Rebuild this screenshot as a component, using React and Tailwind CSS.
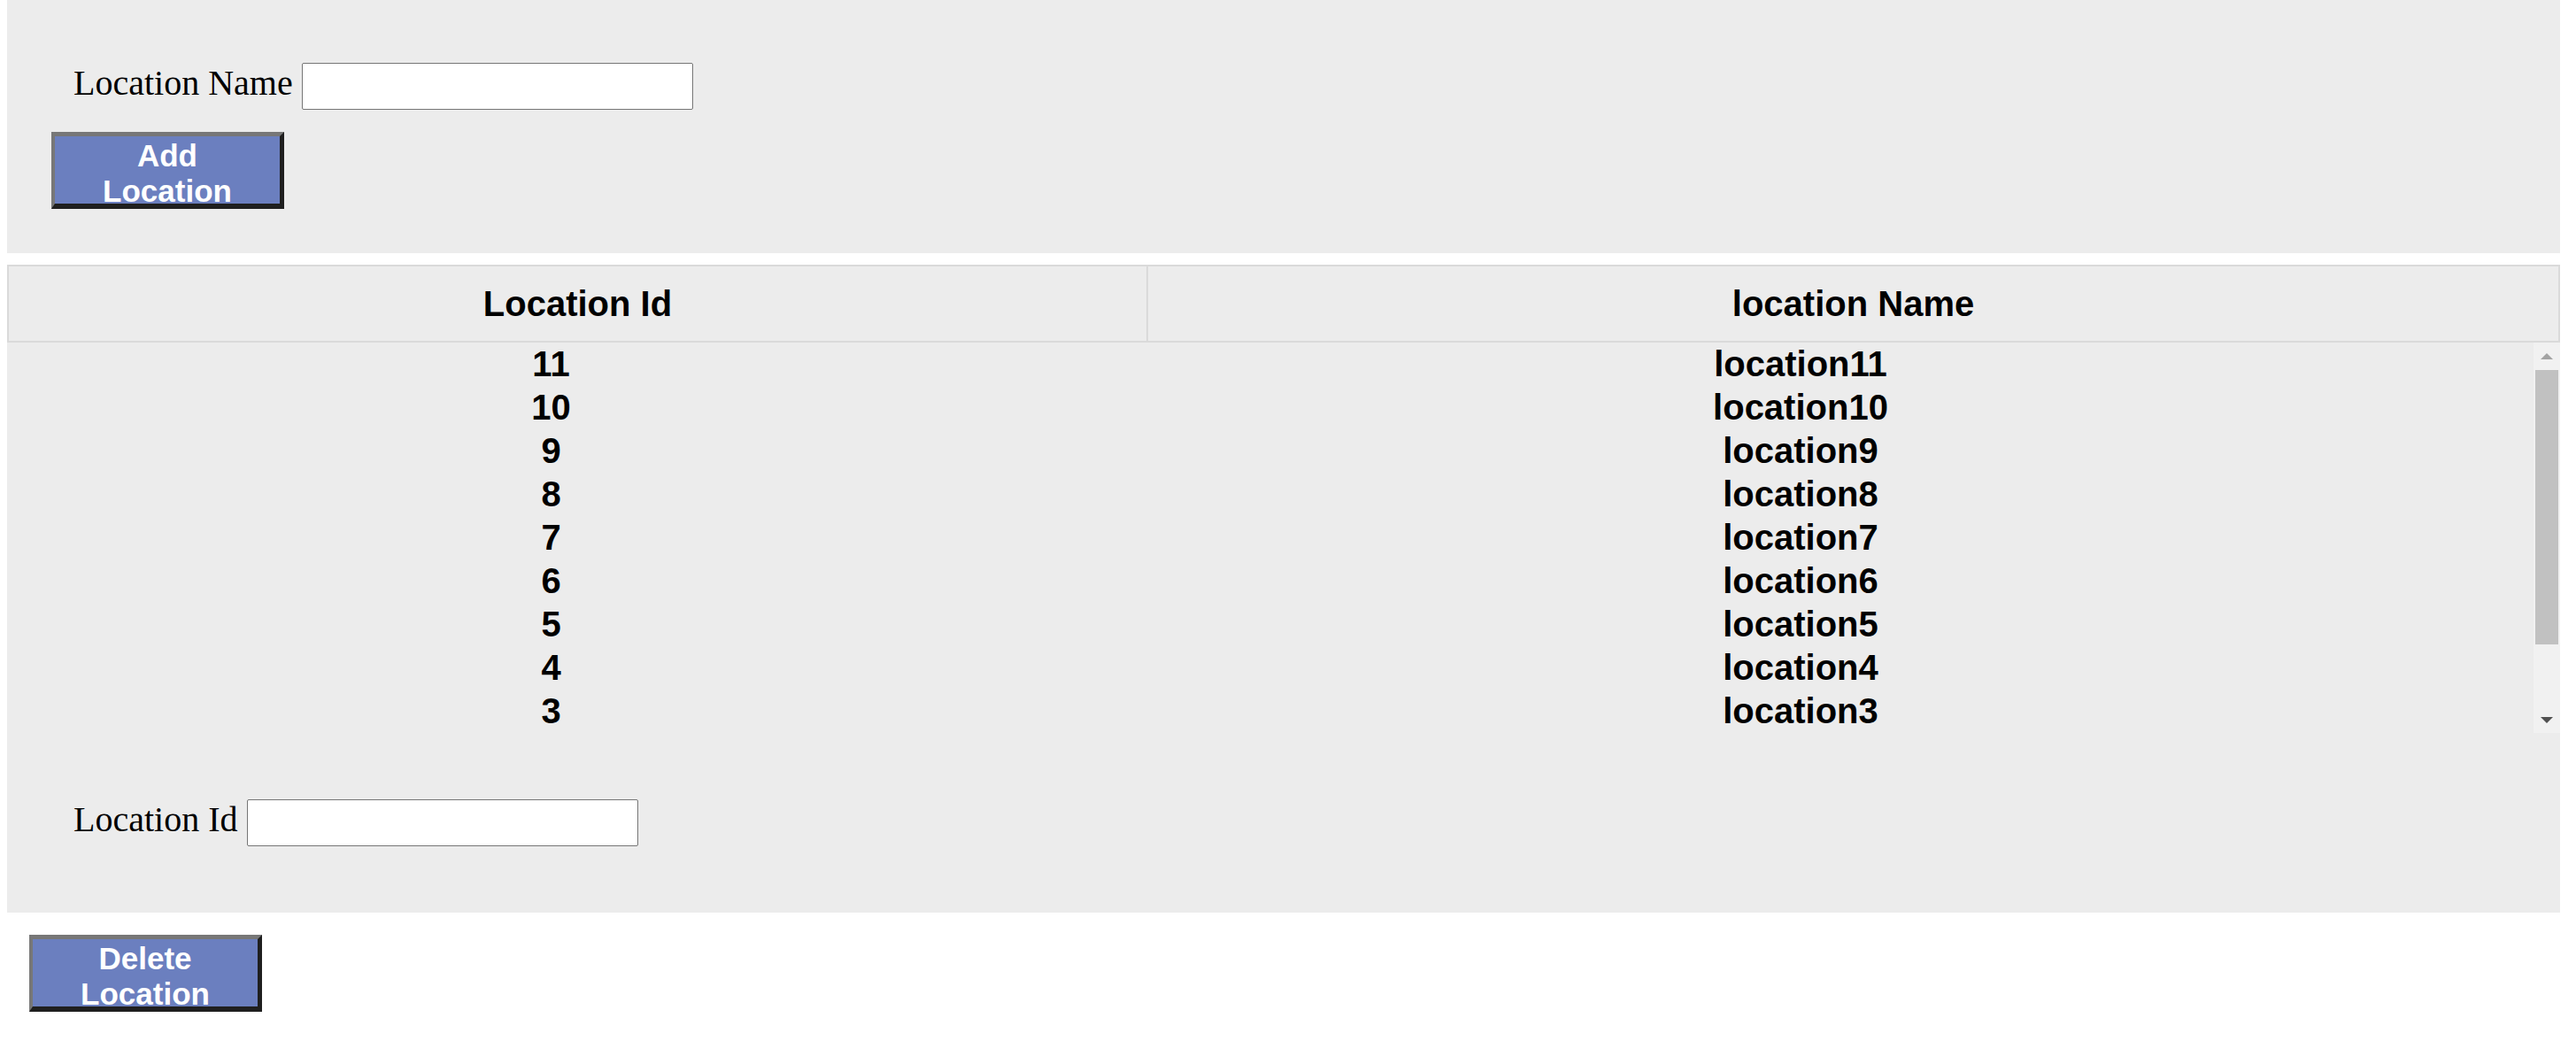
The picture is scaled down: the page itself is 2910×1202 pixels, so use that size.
import React from "react";

const sans = { fontFamily: '"Liberation Sans", Arial, sans-serif' };
const serif = { fontFamily: '"Liberation Serif", "Times New Roman", serif' };

function Field({ label }) {
  return (
    <div className="flex items-start">
      <span className="text-[40px] leading-[44px] mt-[1px] text-black whitespace-pre" style={serif}>
        {label + " "}
      </span>
      <input
        type="text"
        className="w-[442px] h-[53px] bg-white border border-[#767676] rounded-[2px] outline-none"
      />
    </div>
  );
}

function ActionButton({ children }) {
  return (
    <button
      className="w-[263px] h-[87px] bg-[#6b7fbf] text-white font-bold text-[35px] leading-[40px] text-center pt-[2px] border-t-[5px] border-l-[4px] border-b-[6px] border-r-[5px] border-t-[#777777] border-l-[#777777] border-b-[#1f1f1f] border-r-[#1f1f1f] flex flex-col items-center justify-start overflow-visible"
      style={sans}
    >
      {children}
    </button>
  );
}

const rows = [11, 10, 9, 8, 7, 6, 5, 4, 3];

export default function App() {
  return (
    <div className="w-[2910px] h-[1202px] bg-white overflow-hidden" style={sans}>
      {/* Add section */}
      <div className="ml-[8px] w-[2884px] h-[286px] bg-[#ececec] pt-[71px] pl-[75px]">
        <Field label="Location Name" />
        <div className="mt-[25px] -ml-[25px]">
          <ActionButton>
            <span>Add</span>
            <span>Location</span>
          </ActionButton>
        </div>
      </div>

      {/* Table */}
      <div className="ml-[8px] w-[2884px] mt-[13px]">
        <div className="flex h-[88px] border-2 border-[#dadada] bg-[#ececec] font-bold text-[40px] text-black">
          <div className="w-[1287px] border-r-2 border-[#dadada] flex items-center justify-center">
            Location Id
          </div>
          <div className="flex-1 flex items-center justify-center">location Name</div>
        </div>

        <div className="bg-[#ececec]">
          <div className="flex h-[441px]">
            <div className="flex-1">
              {rows.map((r) => (
                <div
                  key={r}
                  className="grid grid-cols-[1229px_1594px] h-[49px] leading-[49px] font-bold text-[40px] text-black text-center"
                >
                  <div>{r}</div>
                  <div>{"location" + r}</div>
                </div>
              ))}
            </div>
            <div className="w-[30px] flex flex-col bg-[#f1f1f1]">
              <div className="h-[31px] flex items-center justify-center">
                <svg width="14" height="7" viewBox="0 0 14 7">
                  <polygon points="7,0 14,7 0,7" fill="#a3a3a3" />
                </svg>
              </div>
              <div className="h-[310px] mx-[2px] bg-[#c1c1c1]" />
              <div className="flex-1" />
              <div className="h-[30px] flex items-center justify-center">
                <svg width="14" height="7" viewBox="0 0 14 7">
                  <polygon points="0,0 14,0 7,7" fill="#505050" />
                </svg>
              </div>
            </div>
          </div>

          {/* Delete field */}
          <div className="h-[203px] pt-[75px] pl-[75px]">
            <Field label="Location Id" />
          </div>
        </div>
      </div>

      <div className="mt-[25px] ml-[33px]">
        <ActionButton>
          <span>Delete</span>
          <span>Location</span>
        </ActionButton>
      </div>
    </div>
  );
}
